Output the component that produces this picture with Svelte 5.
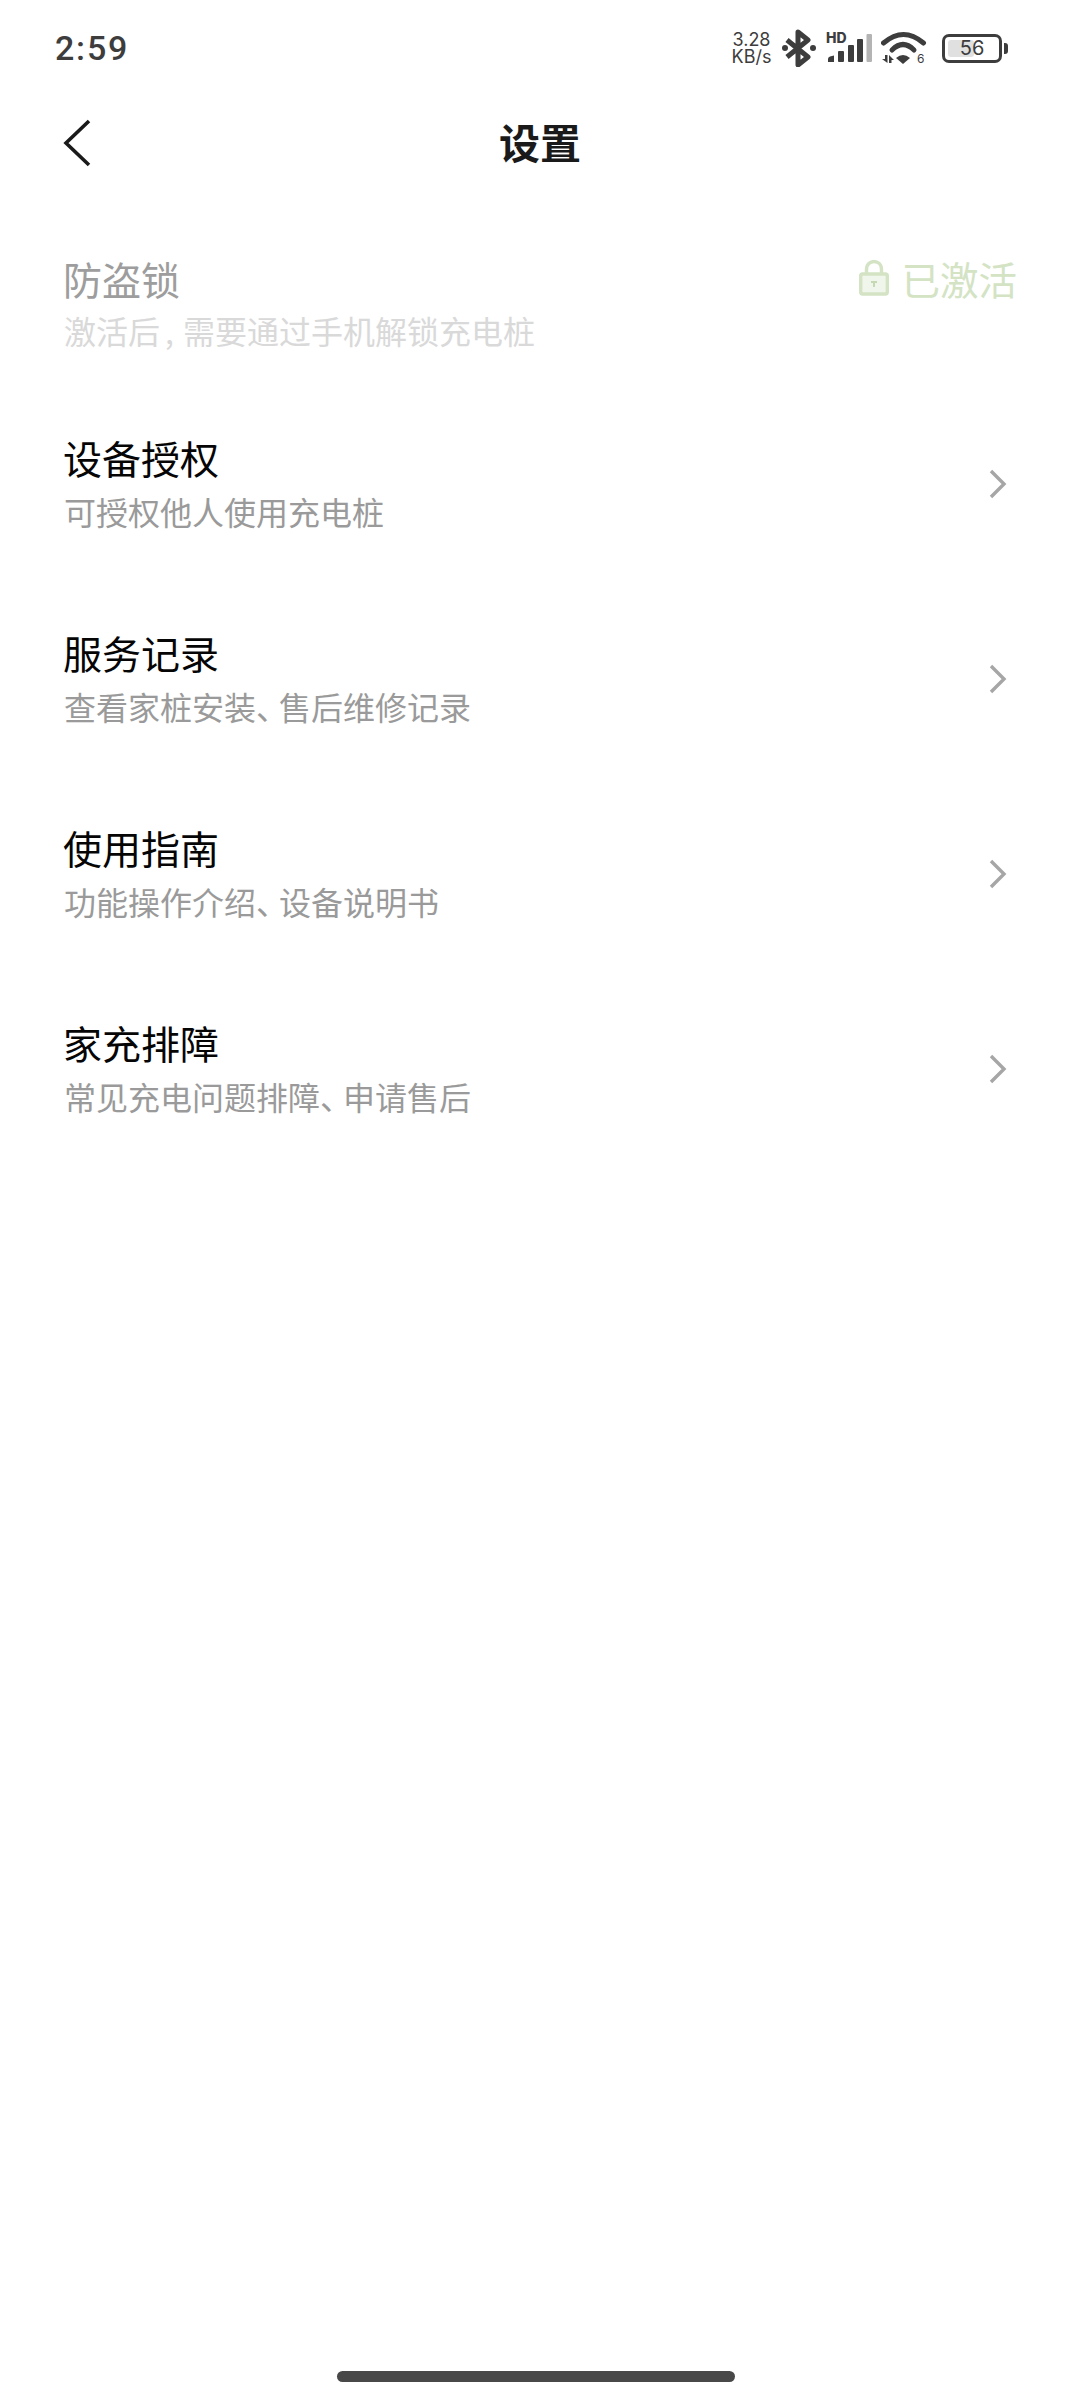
<script>
  const rows = [
    { title: '设备授权', sub: ['可授权他人使用充电桩'] },
    { title: '服务记录', sub: ['查看家桩安装', '售后维修记录'] },
    { title: '使用指南', sub: ['功能操作介绍', '设备说明书'] },
    { title: '家充排障', sub: ['常见充电问题排障', '申请售后'] }
  ];
</script>

<div class="page">
  <div class="status">
    <span class="time">2:59</span>
    <div class="sysicons">
      <div class="speed"><span>3.28</span><span>KB/s</span></div>
      <svg class="bt" width="34" height="38" viewBox="0 0 34 38">
        <path d="M5 11 L26 28 L16 36 V3 L26 11 L5 28" fill="none" stroke="#3d3d3d" stroke-width="5" stroke-linejoin="round" />
        <circle cx="3" cy="19" r="3" fill="#3d3d3d" /><circle cx="31" cy="19" r="3" fill="#3d3d3d" />
      </svg>
      <svg class="sig" width="46" height="40" viewBox="0 -6 46 40">
        <text x="0" y="12" class="hd">HD</text>
        <path d="M2 31 V28 Q2 26 4 25.5 L8 24.5 V31 Z" fill="#3d3d3d" />
        <rect x="12" y="20" width="6" height="11" rx="1" fill="#3d3d3d" />
        <rect x="22" y="14" width="6" height="17" rx="1" fill="#3d3d3d" />
        <rect x="31" y="8" width="6" height="23" rx="1" fill="#3d3d3d" />
        <rect x="40.5" y="3" width="5.5" height="28" rx="1" fill="#b4b4b4" />
      </svg>
      <svg class="wifi" width="46" height="40" viewBox="0 0 46 40">
        <path d="M2.5 12 Q22.5 -5 42.5 12" fill="none" stroke="#3d3d3d" stroke-width="5" stroke-linecap="round" />
        <path d="M11 19 Q22 8 33 19" fill="none" stroke="#3d3d3d" stroke-width="5" stroke-linecap="round" />
        <path d="M15 27 Q22 21 29 27 L22 33 Z" fill="#3d3d3d" />
        <path d="M1 28 H4 V24 H6.5 V32 Z M8 24 L13 29 H10.5 V32 H8 Z" fill="#3d3d3d" />
        <text x="36" y="32" class="six">6</text>
      </svg>
      <div class="battery">
        <div class="shell"><div class="level"></div><span>56</span></div>
        <div class="nub"></div>
      </div>
    </div>
  </div>

  <header class="nav">
    <svg class="back" width="30" height="48" viewBox="0 0 30 48">
      <path d="M27 2 L4 24 L27 46" fill="none" stroke="#1a1a1a" stroke-width="3.6" />
    </svg>
    <h1>设置</h1>
  </header>

  <section class="lock">
    <div class="text">
      <div class="title">防盗锁</div>
      <div class="sub">激活后<span class="comma">,</span>需要通过手机解锁充电桩</div>
    </div>
    <div class="active">
      <svg width="30" height="36" viewBox="0 0 30 36">
        <path d="M7.5 14 V9.5 C7.5 -1 22.5 -1 22.5 9.5 V14" fill="none" stroke="#d3e3c4" stroke-width="3.4" />
        <rect x="1.7" y="14" width="26.6" height="20" rx="2" fill="#f1f6ec" stroke="#d3e3c4" stroke-width="3.4" />
        <path d="M12 22 H18 M15 22 V27" stroke="#c6d9b5" stroke-width="2" />
      </svg>
      <span>已激活</span>
    </div>
  </section>

  <div class="list">
    {#each rows as r}
      <div class="row">
        <div class="text">
          <div class="title">{r.title}</div>
          <div class="sub">{#each r.sub as part, i}{#if i > 0}<span class="dun">、</span>{/if}{part}{/each}</div>
        </div>
        <svg class="chev" width="20" height="30" viewBox="0 0 20 30">
          <path d="M3 2 L16 15 L3 28" fill="none" stroke="#a6a6a6" stroke-width="3.4" />
        </svg>
      </div>
    {/each}
  </div>

  <div class="home"></div>
</div>

<style>
  :global(body) {
    margin: 0;
    background: #fff;
    font-family: "Noto Sans CJK SC", "Noto Sans", sans-serif;
  }
  .page {
    position: relative;
    width: 1080px;
    height: 2400px;
    background: #fff;
    overflow: hidden;
    padding-top: 24px;
    box-sizing: border-box;
  }
  .status {
    height: 48px;
    display: flex;
    align-items: center;
    justify-content: space-between;
    padding: 0 72px 0 55px;
  }
  .time {
    font-family: "Roboto", sans-serif;
    font-size: 34px;
    font-weight: 500;
    letter-spacing: 1.8px;
    color: #3d3d3d;
  }
  .sysicons {
    display: flex;
    align-items: center;
    color: #3d3d3d;
  }
  .speed {
    display: flex;
    flex-direction: column;
    align-items: center;
    font-family: "Inter", sans-serif;
    font-size: 18px;
    line-height: 17px;
    width: 41px;
    margin-right: 10px;
  }
  .bt { margin-right: 10px; }
  .sig { margin: 0 9px 6px 0; }
  .hd { font-family: "Inter", sans-serif; font-size: 14px; font-weight: 800; fill: #3d3d3d; }
  .wifi { margin: 6px 15px 0 0; }
  .six { font-family: "Inter", sans-serif; font-size: 12px; fill: #3d3d3d; }
  .battery { display: flex; align-items: center; gap: 2px; }
  .shell {
    position: relative;
    width: 54px;
    height: 23px;
    border: 3px solid #3d3d3d;
    border-radius: 7px;
    box-sizing: content-box;
    display: flex;
    align-items: center;
    justify-content: center;
    font-family: "Inter", sans-serif;
    font-size: 20px;
  }
  .shell span { position: relative; }
  .level {
    position: absolute;
    left: 3px; top: 3px; bottom: 3px;
    width: 26px;
    background: #e0e0e0;
    border-radius: 3px;
  }
  .nub { width: 4px; height: 11px; background: #3d3d3d; border-radius: 0 3px 3px 0; }

  .nav {
    position: relative;
    height: 110px;
    margin-top: 14px;
    display: flex;
    align-items: center;
    justify-content: center;
  }
  .back { position: absolute; left: 62px; top: 33px; }
  h1 {
    margin: 0;
    font-size: 41px;
    font-weight: 700;
    color: #1a1a1a;
  }
  .lock {
    margin-top: 56px;
    padding: 0 64px;
    display: flex;
    justify-content: space-between;
    align-items: flex-start;
    height: 181px;
  }
  .title {
    font-size: 39px;
    line-height: 52px;
    color: #050505;
    margin-left: -1px;
  }
  .row .title { line-height: 49px; margin-bottom: 3px; }
  .sub {
    font-size: 32px;
    line-height: 52px;
    color: #9a9a9a;
  }
  .comma { margin: 0 9px 0 5px; }
  .dun { letter-spacing: -9px; }
  .lock .title { color: #9d9d9d; }
  .lock .sub { color: #d9d9d9; }
  .active {
    display: flex;
    align-items: center;
    gap: 12px;
    height: 52px;
    color: #d3e3c4;
    font-size: 38.5px;
    margin-right: -1px;
  }
  .row {
    height: 195px;
    padding: 0 64px;
    display: flex;
    justify-content: space-between;
    align-items: flex-start;
    box-sizing: border-box;
  }
  .chev { margin: 36px 8px 0 0; }
  .home {
    position: absolute;
    left: 337px;
    top: 2371px;
    width: 398px;
    height: 11px;
    border-radius: 6px;
    background: #484848;
  }
</style>
